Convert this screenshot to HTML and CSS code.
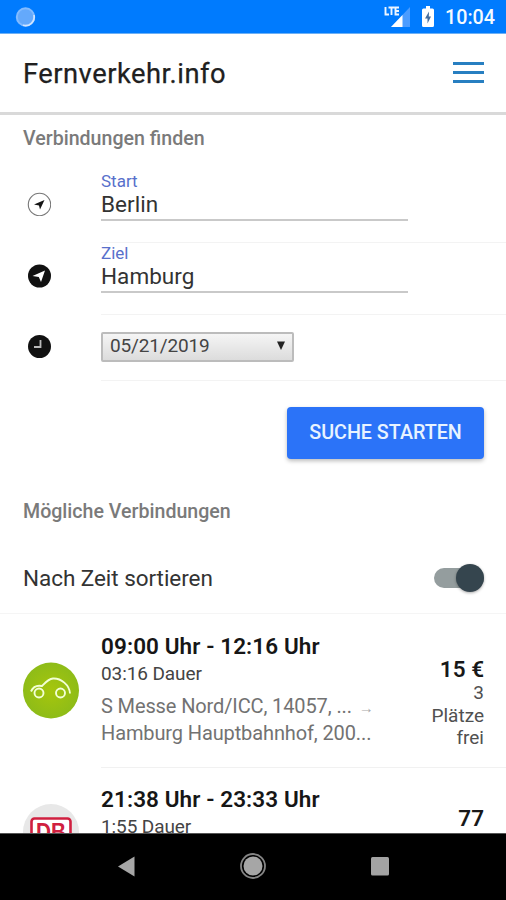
FILE: index.html
```html
<!DOCTYPE html>
<html lang="de">
<head>
<meta charset="utf-8">
<title>Fernverkehr.info</title>
<link rel="stylesheet" href="styles.css">
</head>
<body>
<div class="phone">
  <div class="status">
    <svg class="sync" width="22" height="22" viewBox="0 0 22 22"><circle cx="11.500" cy="11" r="8.700" fill="#64a9fb" stroke="#82bbff" stroke-width="2"/><path d="M20 9a8.800 8.800 0 0 1-11 10.300" fill="none" stroke="#d0e5ff" stroke-width="1.700"/></svg>
    <div class="status-right">
      <svg class="signal" width="28" height="24" viewBox="0 0 28 24"><path d="M26 3v20H7z" fill="#4b9cff"/><path d="M18.500 11v12H7z" fill="#fff"/><path d="M1.500 3v7.500h3.500M4.500 3.500h6M7.500 3.500V11M15 3.500h-3.500v7H15M11.500 7H15" fill="none" stroke="#eef6ff" stroke-width="1.900"/></svg>
      <svg class="battery" width="12" height="21" viewBox="0 0 12 21"><path d="M1.500 2.500H4V0h4v2.500h2.500Q12 2.500 12 4v15.500q0 1.500-1.500 1.500h-9Q0 21 0 19.500V4q0-1.500 1.500-1.500z" fill="#fff"/><path d="M7 5.500L3 12.500h2.500V17.500L9 10.500H6.800z" fill="#456d9d"/></svg>
      <span class="clock">10:04</span>
    </div>
  </div>
  <header class="toolbar">
    <h1>Fernverkehr.info</h1>
    <div class="burger"><i></i><i></i><i></i></div>
  </header>
  <main>
    <h2 class="find">Verbindungen finden</h2>
    <div class="row start">
      <svg class="icon" width="24" height="24" viewBox="0 0 24 24"><circle cx="12.500" cy="12.500" r="11.200" fill="#fff" stroke="#777" stroke-width="1.100"/><path d="M17.500 8L13 17.500 12 13.500 7 12.500z" fill="#151515"/></svg>
      <div class="field"><label>Start</label><div class="value">Berlin</div></div>
    </div>
    <div class="row ziel">
      <svg class="icon" width="24" height="24" viewBox="0 0 24 24"><circle cx="12.500" cy="12" r="11.500" fill="#111"/><path d="M18 6.500L14 18 11.800 13 5.500 12z" fill="#fff"/></svg>
      <div class="field"><label>Ziel</label><div class="value">Hamburg</div></div>
    </div>
    <div class="row date">
      <svg class="icon" width="24" height="24" viewBox="0 0 24 24"><circle cx="12.500" cy="11.500" r="11.500" fill="#111"/><path d="M13.500 5V12H7" fill="none" stroke="#bbb" stroke-width="1.800"/></svg>
      <div class="cell"><div class="select"><span>05/21/2019</span><svg width="8" height="9" viewBox="0 0 8 9"><path d="M0 .5h8L4 9z" fill="#222"/></svg></div></div>
    </div>
    <div class="action"><div class="button">SUCHE STARTEN</div></div>
    <h2 class="results">Mögliche Verbindungen</h2>
    <div class="sort"><span>Nach Zeit sortieren</span><div class="toggle"><div class="knob"></div></div></div>
    <div class="trip">
      <svg class="logo" width="58" height="58" viewBox="0 0 58 58"><defs><radialGradient id="g"><stop offset="0" stop-color="#a6c60c"/><stop offset="1" stop-color="#8ebc18"/></radialGradient></defs><circle cx="29" cy="28.500" r="28" fill="url(#g)"/><g fill="none" stroke="#f2ffd5" stroke-width="1.900"><path d="M9 29.500C11 25 15 23 20 24C23 21 26 17 31 16.500C39 16 47.500 23 48 31.500"/><circle cx="17" cy="31" r="4.500"/><circle cx="38.500" cy="31" r="4.500"/></g></svg>
      <div class="body">
        <div class="info">
          <div class="time">09:00 Uhr - 12:16 Uhr</div>
          <div class="duration">03:16 Dauer</div>
          <div class="route"><div>S Messe Nord/ICC, 14057, ... <small>→</small></div><div>Hamburg Hauptbahnhof, 200...</div></div>
        </div>
        <div class="price"><b>15 €</b><div>3</div><div>Plätze</div><div>frei</div></div>
      </div>
    </div>
    <div class="trip next">
      <svg class="logo" width="58" height="58" viewBox="0 0 58 58"><circle cx="29" cy="29" r="28" fill="#e8e8e8"/><rect x="9.500" y="15.500" width="39" height="27" rx="3" fill="#fff" stroke="#d02040" stroke-width="2.600"/><text x="29" y="36.500" text-anchor="middle" class="db" textLength="30" lengthAdjust="spacingAndGlyphs">DB</text></svg>
      <div class="body">
        <div class="info">
          <div class="time">21:38 Uhr - 23:33 Uhr</div>
          <div class="duration">1:55 Dauer</div>
        </div>
        <div class="price"><b>77</b><b>€</b></div>
      </div>
    </div>
  </main>
  <nav class="navbar">
    <svg width="28" height="28" viewBox="0 0 28 28"><path d="M22.500 4.500v20L6 14.500z" fill="#a6a6a6"/></svg>
    <svg width="28" height="28" viewBox="0 0 28 28"><circle cx="14" cy="14" r="12" fill="none" stroke="#858585" stroke-width="1.800"/><circle cx="14" cy="14" r="9.500" fill="#a6a6a6"/></svg>
    <svg width="28" height="28" viewBox="0 0 28 28"><rect x="6" y="5" width="18" height="18.500" rx="1.500" fill="#a3a3a3"/></svg>
  </nav>
</div>
</body>
</html>
```
FILE: styles.css
```css
* { box-sizing: border-box; }
body { margin: 0; font-family: Roboto, "Liberation Sans", sans-serif; background: #fff; }
svg { display: block; flex: none; }
h1, h2 { margin: 0; font-weight: 500; }
.phone { width: 506px; height: 900px; display: flex; flex-direction: column; overflow: hidden; }
.status { height: 34px; flex: none; background: #007bfe; border-bottom: 1px solid #6db0f5; display: flex; justify-content: space-between; padding: 0 11px 0 14px; }
.sync { margin-top: 6px; }
.status-right { display: flex; }
.signal { margin-top: 4px; }
.battery { margin: 6px 11px 0 10px; }
.clock { color: #f4faff; font-size: 19.700px; line-height: 35px; font-weight: 500; width: 50px; white-space: nowrap; }
.toolbar { height: 81px; flex: none; display: flex; justify-content: space-between; align-items: flex-start; padding: 0 22px 0 23px; border-bottom: 3px solid #d9d9d9; }
h1 { font-size: 27.300px; line-height: 81px; color: #202020; letter-spacing: .5px; font-weight: 400; -webkit-text-stroke: .25px #202020; }
.burger { width: 31px; display: flex; flex-direction: column; gap: 6px; margin-top: 28px; }
.burger i { height: 3px; background: #287fc1; }
main { flex: 1; min-height: 0; overflow: hidden; }
h2 { font-size: 19.600px; line-height: 24px; color: #7a7a7a; padding-left: 23px; }
.find { padding-top: 12px; height: 53px; }
.row { display: flex; padding-left: 27px; }
.row .icon { margin-right: 50px; }
.field, .cell { flex: 1; border-bottom: 1px solid #f3f3f3; }
.start { height: 75px; }
.ziel { height: 72px; }
.date { height: 66px; }
.start .icon { margin-top: 24px; }
.ziel .icon { margin-top: 21px; }
.date .icon { margin-top: 20px; }
.field label { display: block; font-size: 17px; line-height: 20px; color: #5870cb; }
.start label { margin-top: 3px; }
.value { width: 307px; height: 30px; font-size: 22.500px; line-height: 27px; color: #333; border-bottom: 2px solid #c9c9c9; letter-spacing: .05px; }
.select { width: 193px; height: 30px; margin-top: 17px; border: 2px solid #bcbcbc; border-radius: 2px; background: linear-gradient(#f5f5f5, #dcdcdc); display: flex; align-items: center; justify-content: space-between; padding: 0 7px 4px; font-size: 19px; letter-spacing: -.15px; color: #444; }
.action { display: flex; justify-content: flex-end; padding: 26px 22px 0; height: 118px; }
.button { width: 197px; height: 52px; border-radius: 4px; background: #2b73f8; color: #e8f3ff; font-size: 19.700px; font-weight: 500; line-height: 51px; text-align: center; box-shadow: 0 2px 4px #0004; }
.results { height: 44px; padding-top: 1px; }
.sort { height: 71px; display: flex; justify-content: space-between; padding: 22px 22px 0 23px; font-size: 22.500px; line-height: 27px; color: #333; letter-spacing: -.05px; border-bottom: 1px solid #f5f5f5; }
.toggle { width: 50px; height: 20px; border-radius: 10px; background: #949d9e; margin-top: 3px; display: flex; justify-content: flex-end; align-items: center; }
.knob { width: 28px; height: 28px; flex: none; border-radius: 50%; background: #35454e; box-shadow: 0 1px 3px #0005; }
.trip { height: 154px; display: flex; padding-left: 22px; }
.logo { margin: 48px 21px 0 0; }
.body { flex: 1; display: flex; justify-content: space-between; padding-right: 22px; border-bottom: 1px solid #f1f1f1; white-space: nowrap; }
.time { margin-top: 18px; font-size: 22.500px; line-height: 28px; font-weight: 600; color: #161616; letter-spacing: .1px; }
.duration { font-size: 19px; line-height: 28px; color: #444; letter-spacing: -.1px; }
.route { font-size: 20px; line-height: 27px; margin-top: 5px; color: #727272; letter-spacing: -.12px; }
.route div { height: 27px; }
.route small { font-size: 15px; line-height: 20px; color: #aaa; margin-left: 2px; }
.price { text-align: right; padding-top: 42px; font-size: 19px; line-height: 22.500px; color: #505050; }
.price b { display: block; font-size: 22.500px; line-height: 26px; font-weight: 600; color: #181818; }
.next .logo { margin-top: 35px; }
.next .time { margin-top: 17px; }
.next .price { padding-top: 38px; }
.next .price b { line-height: 24px; }
.db { font: 700 24px "Liberation Sans", sans-serif; fill: #d02040; }
.navbar { height: 67px; flex: none; background: #000; border-top: 1px solid #555; display: flex; justify-content: space-between; padding: 18px 113px 0 112px; }
```
